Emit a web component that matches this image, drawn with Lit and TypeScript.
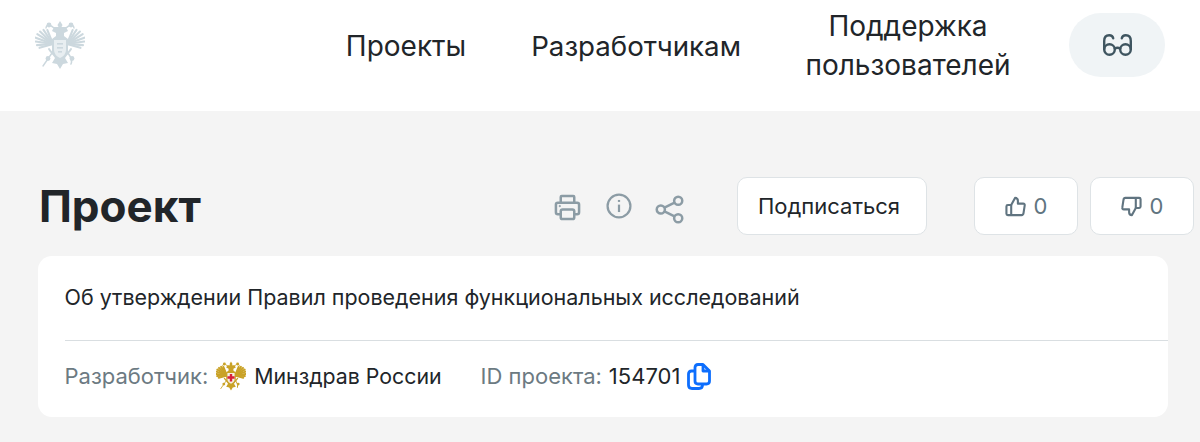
import { LitElement, html, css, svg } from "lit";
import { customElement } from "lit/decorators.js";

const feathers = Array.from({ length: 8 }, (_, i) => {
  const a = ((-112 - i * 12) * Math.PI) / 180;
  const len = [15, 17, 18, 18.5, 18.5, 17.5, 16, 14][i];
  const x = 18 + Math.cos(a) * len;
  const y = 24 + Math.sin(a) * len;
  return [x, y];
});

const eagle = (c: string, accent: string, cross: boolean) => svg`
  <g fill="none" stroke="${c}" stroke-linecap="round">
    ${feathers.map(([x, y]) => svg`
      <path d="M18 24 L${x} ${y}" stroke-width="${cross ? 3.4 : 2.1}"/>
      <path d="M32 24 L${50 - x} ${y}" stroke-width="${cross ? 3.4 : 2.1}"/>`)}
    <path d="M17 33 L8 46" stroke-width="1.4" />
    <path d="M33 33 Q38 40 36 44" stroke-width="1.6"/>
    <path d="M14 29 Q17 34 21 35" stroke-width="2"/>
    <path d="M36 29 Q33 34 29 35" stroke-width="2"/>
    <path d="M19 8 Q12 2 11 8 M31 8 Q38 2 39 8" stroke-width="1.4"/>
  </g>
  <g fill="${c}">
    <path d="M25 1 L27.5 5 L26.5 7 L31 7 L33 11 L29 13 L29 16 L33 19 L33 34 L30 38 L33 43 L28 44 L25 49 L22 44 L17 43 L20 38 L17 34 L17 19 L21 16 L21 13 L17 11 L19 7 L23.5 7 L22.5 5 Z"/>
    <circle cx="13" cy="38.5" r="2.4"/><circle cx="37" cy="38.5" r="2.4"/>
    <circle cx="14" cy="5" r="2.4"/><circle cx="36" cy="5" r="2.4"/>
  </g>
  <path d="M19 20 H31 V30 Q31 35 25 38 Q19 35 19 30 Z" fill="${accent}"/>
  ${cross
    ? svg`<path d="M23 21.5 h4 v4 h4 v4 h-4 v4.5 h-4 v-4.5 h-4 v-4 h4 z" fill="#d8203a"/>`
    : svg`<g fill="${c}"><rect x="22" y="23" width="6" height="1.6"/><rect x="22" y="27" width="6" height="1.6"/><rect x="23" y="31" width="4" height="1.6"/></g>`}
`;

@customElement("app-root")
export class AppRoot extends LitElement {
  static styles = css`
    :host { display: block; width: 1200px; height: 442px; overflow: hidden; background: #f4f4f4; font-family: Inter, "Noto Sans", sans-serif; color: #212529; }
    header { height: 111px; background: #fff; display: flex; align-items: center; box-sizing: border-box; padding: 0 35px 21px; }
    .logo { width: 50px; height: 50px; display: block; }
    nav { margin-left: auto; display: flex; align-items: center; }
    nav a { font-size: 28px; line-height: 39px; padding-top: 2px; color: #212529; text-align: center; }
    nav a.n1 { margin-right: 65px; font-size: 28px; }
    nav a.n2 { margin-right: 64px; font-size: 27.7px; }
    .n3 { width: 206px; margin-right: 58px; }
    .eye { width: 96px; height: 64px; border-radius: 32px; background: #f0f4f6; display: flex; align-items: center; justify-content: center; }
    .eye svg { width: 29px; height: 22px; display: block; }
    .head { display: flex; align-items: center; height: 58px; margin-top: 66px; padding-left: 39px; }
    .head > * { flex: none; }
    h1 { margin: 0; font-size: 44px; line-height: 58px; font-weight: 700; color: #212529; width: 515px; }
    .icons { display: flex; align-items: center; width: 183px; }
    .icons svg { display: block; flex: none; }
    .i1 { width: 27px; height: 27px; margin-right: 25px; margin-top: 2px; }
    .i2 { width: 26px; height: 26px; margin-right: 23px; margin-bottom: 1px; }
    .i3 { width: 29px; height: 29px; margin-top: 6px; }
    .btn { background: #fff; border: 1px solid #dee3e6; border-radius: 10px; box-sizing: border-box; height: 58px; display: flex; align-items: center; justify-content: center; font-size: 22px; color: #212529; }
    .sub { width: 190px; margin-right: 47px; padding-right: 6px; }
    .vote { width: 104px; margin-right: 12px; gap: 8px; color: #607480; }
    .card { margin: 21px 32px 0 38px; height: 161px; background: #fff; border-radius: 14px; box-sizing: border-box; padding: 25px 0 0 26.5px; }
    .title { font-size: 21.47px; line-height: 33px; color: #212529; }
    .line { height: 1px; background: #d9dee1; margin: 26px 0 0; }
    .meta { display: flex; align-items: center; height: 36px; margin-top: 17px; font-size: 22px; }
    .lbl { color: #6c7a82; }
    .emb { width: 30px; height: 32px; margin: 0 8px; }
    .dev { margin-right: 39px; font-size: 21.3px; }
    .id { margin-left: 7px; }
    .copy { margin-left: 7px; width: 24px; height: 27px; }
  `;
  render() {
    return html`
      <header>
        <svg class="logo" viewBox="0 0 50 50">${eagle("#ccd8de", "#e8eef1", false)}</svg>
        <nav>
          <a class="n1">Проекты</a>
          <a class="n2">Разработчикам</a>
          <a class="n3">Поддержка пользователей</a>
          <div class="eye">
            <svg viewBox="0 0 29 22" fill="none" stroke="#3f5560" stroke-width="2.4" stroke-linecap="round">
              <circle cx="6.5" cy="15.5" r="5.3"/><circle cx="22.5" cy="15.5" r="5.3"/>
              <path d="M11.8 14.5 q2.7 -1.5 5.4 0"/>
              <path d="M1.2 15 V7 q0 -5.8 5 -5.8 q3.4 0 4 3"/>
              <path d="M27.8 15 V7 q0 -5.8 -5 -5.8 q-3.4 0 -4 3"/>
            </svg>
          </div>
        </nav>
      </header>
      <div class="head">
        <h1>Проект</h1>
        <div class="icons">
          <svg class="i1" viewBox="0 0 28 28" fill="none" stroke="#8c9ca5" stroke-width="2.6" stroke-linejoin="round">
            <path d="M7 9 V3 q0 -1 1 -1 H20 q1 0 1 1 V9"/>
            <path d="M7 21 H4 q-2 0 -2 -2 V11 q0 -2 2 -2 H24 q2 0 2 2 V19 q0 2 -2 2 H21"/>
            <rect x="7" y="16" width="14" height="10" rx="2"/>
            <circle cx="6" cy="12.5" r=".7" fill="#8c9ca5" stroke-width="1"/>
          </svg>
          <svg class="i2" viewBox="0 0 28 28" fill="none" stroke="#8c9ca5" stroke-width="2.4">
            <circle cx="14" cy="14" r="12.3"/>
            <path d="M14 12.5 V20.5"/><path d="M14 7.5 V9.6"/>
          </svg>
          <svg class="i3" viewBox="0 0 30 30" fill="none" stroke="#8c9ca5" stroke-width="2.6">
            <circle cx="6" cy="15" r="4.2"/><circle cx="24" cy="6" r="4.2"/><circle cx="24" cy="24" r="4.2"/>
            <path d="M9.8 13 L20.2 8"/><path d="M9.8 17 L20.2 22"/>
          </svg>
        </div>
        <div class="btn sub">Подписаться</div>
        <div class="btn vote">
          <svg width="21" height="21" viewBox="0 0 22 22" fill="none" stroke="#607480" stroke-width="2.2" stroke-linejoin="round">
            <path d="M6.5 20 H3 q-1.5 0 -1.5 -1.5 V11 q0 -1.5 1.5 -1.5 H6.5 L10.5 2 q3 0 3 3 V8 H19 q2 0 1.6 2 L19.4 18 q-.3 2 -2 2 Z"/><path d="M6.5 9.5 V20"/>
          </svg>
          <span>0</span>
        </div>
        <div class="btn vote">
          <svg width="21" height="21" viewBox="0 0 22 22" fill="none" stroke="#607480" stroke-width="2.2" stroke-linejoin="round">
            <path d="M15.5 2 H19 q1.5 0 1.5 1.5 V11 q0 1.5 -1.5 1.5 H15.5 L11.5 20 q-3 0 -3 -3 V14 H3 q-2 0 -1.6 -2 L2.6 4 q.3 -2 2 -2 Z"/><path d="M15.5 12.5 V2"/>
          </svg>
          <span>0</span>
        </div>
      </div>
      <div class="card">
        <div class="title">Об утверждении Правил проведения функциональных исследований</div>
        <div class="line"></div>
        <div class="meta">
          <span class="lbl">Разработчик:</span>
          <svg class="emb" viewBox="0 0 50 50">${eagle("#c9a227", "#f6f1e0", true)}</svg>
          <span class="dev">Минздрав России</span>
          <span class="lbl">ID проекта:</span>
          <span class="id">154701</span>
          <svg class="copy" viewBox="0 0 24 27" fill="none" stroke="#0d6efd" stroke-width="2.8" stroke-linejoin="round">
            <path d="M7 8 H4.5 q-3 0 -3 3 V22 q0 3.5 3.5 3.5 H12 q3.5 0 3.5 -3.5 V21"/>
            <path d="M8 4.5 q0 -3 3 -3 H16 L22.5 8 V18 q0 3 -3 3 H11 q-3 0 -3 -3 Z"/>
            <path d="M16 1.5 V8 H22.5"/>
          </svg>
        </div>
      </div>
    `;
  }
}
